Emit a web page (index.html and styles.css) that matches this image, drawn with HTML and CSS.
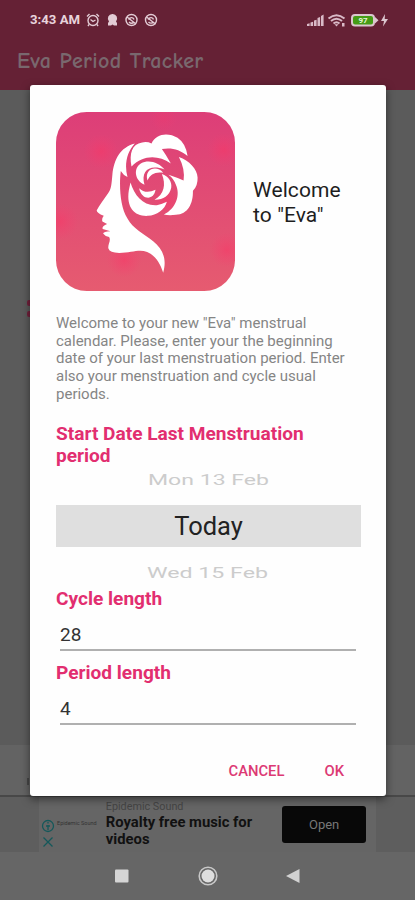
FILE: index.html
```html
<!DOCTYPE html>
<html lang="en">
<head>
<meta charset="utf-8">
<title>Eva Period Tracker</title>
<link rel="stylesheet" href="styles.css">
</head>
<body>
<div class="screen">
  <header class="appbar">
    <div class="status">
      <span class="clock">3:43 AM</span>
      <svg class="status-left" viewBox="0 0 74 16">
        <g fill="none" stroke="#e3ccd5" stroke-width="1.4">
          <circle cx="8" cy="8.5" r="5"/><path d="M2 4.5 4.5 2M14 4.5 11.500 2M4 12.500 3 14M12 12.500l1 1.500M5.500 7.500 8 9.500l2.500-1.500"/>
          <circle cx="46.500" cy="8" r="5.500"/><path d="M42 5l9 7M43.500 7.500c2-3 5-2 5.500 0M44 10c2 2 4 1 5 0"/>
          <circle cx="66" cy="8" r="5.500"/><path d="M61.500 5l9 7M63 7.500c2-3 5-2 5.500 0M63.500 10c2 2 4 1 5 0"/>
        </g>
        <path fill="#e3ccd5" d="M27.500 2a4.500 4.500 0 0 1 3.500 7.500l1 1.500v2.500h-3l-1.500-1-1.500 1h-3V11l1-1.500A4.500 4.500 0 0 1 27.500 2z"/>
      </svg>
      <svg class="status-right" viewBox="0 0 84 16">
        <path fill="#d9bac7" d="M1 14v-2l2.600-.8V14zM4.500 14v-3.500l2.600-.8V14zM8 14V8.500l2.600-.8V14zM11.500 14V6l2.600-1v9zM15 14V4l2.600-1.500V14z"/>
        <g fill="none" stroke="#d9bac7" stroke-width="2"><path d="M22.500 6.500q8-6.500 16 0M25 9q5.500-4.500 11 0M27.500 11.500q3-2.500 6 0"/></g>
        <path fill="#d9bac7" d="m30.500 14.500-2-2.200h4zM36 11h2.500v3.500H36z"/>
        <rect x="46" y="3" width="22" height="10.500" rx="3" fill="#459b16" stroke="#dcc6cf" stroke-width="2"/>
        <path fill="#dcc6cf" d="m69 5 3.500 3.200L69 11.500zM79 2l-4 7h3l-1 5.500 5-7.500h-3.300z"/>
        <text x="57" y="11" class="battery-text">97</text>
      </svg>
    </div>
    <h1 class="app-title">Eva Period Tracker</h1>
  </header>
  <main class="backdrop"><span class="backdrop-mark"></span><span class="backdrop-mark"></span></main>
  <section class="summary"><span class="summary-mark"></span></section>
  <aside class="ad">
    <div class="ad-brand">
      <svg class="ad-icons" viewBox="0 0 14 32"><g fill="none" stroke="#14585a" stroke-width="1.300"><circle cx="7" cy="7" r="5.500"/><path d="M7 6v5M7 3v1.500M5 7h4M2.500 18.500l9 9M11.500 18.500l-9 9"/></g></svg>
      <span class="ad-logo">Epidemic Sound</span>
    </div>
    <div class="ad-copy">
      <span class="ad-name">Epidemic Sound</span>
      <strong class="ad-headline">Royalty free music for<br>videos</strong>
    </div>
    <span class="ad-button">Open</span>
  </aside>
  <nav class="navbar">
    <svg class="nav-icons" viewBox="0 0 190 24">
      <rect x="3" y="5.500" width="13.500" height="13" rx="1" fill="#d5d5d5"/>
      <circle cx="96" cy="12" r="8.800" fill="none" stroke="#c8c8c8" stroke-width="1.600"/><circle cx="96" cy="12" r="6.500" fill="#dedede"/>
      <path d="M187.500 5v14l-13.500-7z" fill="#d2d2d2"/>
    </svg>
  </nav>

  <div class="dialog">
    <div class="intro">
      <svg class="logo" viewBox="18 19 536 536">
        <defs>
          <linearGradient id="tile" x1="0" y1="0" x2="0" y2="1"><stop offset="0" stop-color="#dd3e78"/><stop offset="1" stop-color="#e65b70"/></linearGradient>
          <radialGradient id="spark"><stop offset="0" stop-color="#fa3565" stop-opacity=".5"/><stop offset="1" stop-color="#fa3b70" stop-opacity="0"/></radialGradient>
          <clipPath id="round"><rect x="18" y="19" width="536" height="536" rx="92"/></clipPath>
        </defs>
        <g clip-path="url(#round)">
          <path fill="url(#tile)" d="M18 19h536v536H18z"/>
          <g fill="url(#spark)"><circle cx="153" cy="137" r="52"/><circle cx="520" cy="132" r="50"/><circle cx="30" cy="347" r="55"/><circle cx="222" cy="462" r="52"/><circle cx="530" cy="432" r="52"/><circle cx="340" cy="38" r="40" opacity=".5"/><circle cx="350" cy="285" r="40"/></g>
        </g>
        <g fill="#fff">
          <path d="M254 113C210 125 192 160 187 205C184 238 184 250 173 264C160 283 148 299 140 313Q139 320 161 330Q154 339 157 347L171 354Q154 361 158 369L181 376Q160 377 159 383Q164 391 177 393C184 404 172 416 175 428Q179 441 207 441C245 440 267 429 291 438C316 449 329 471 339 500C351 458 337 429 309 406C281 383 249 370 232 338C209 303 207 237 212 196Q219 208 232 214C222 176 230 139 254 113Z"/>
          <path d="M244 182C237 142 245 115 276 110Q291 107 304 113C318 82 355 80 382 96Q407 113 412 151C389 131 363 125 335 130Q347 147 362 173C323 147 280 147 244 182Z"/>
          <path d="M386 154C417 164 441 191 442 215Q443 240 428 255C429 293 413 326 377 327Q356 330 341 326C378 308 391 267 377 237Q370 218 355 207Q379 215 400 224Q405 190 386 154Z"/>
          <path d="M241 230C253 269 279 301 320 298Q336 295 350 288C344 311 320 329 293 330C254 332 228 306 236 254Z"/>
          <path d="M283 237C252 222 250 187 272 173C297 160 326 171 343 191C299 174 271 194 283 237Z"/>
          <path d="M292 224C281 190 319 176 339 201C315 197 300 206 292 224Z"/>
          <path d="M335 205C355 211 366 229 363 246C358 271 337 283 313 282C342 266 348 237 335 205Z"/>
          <path d="M267 247Q286 266 316 252C311 286 273 282 267 247Z"/>
        </g>
      </svg>
      <h2 class="welcome">Welcome<br>to "Eva"</h2>
    </div>
    <p class="description">Welcome to your new "Eva" menstrual<br>calendar. Please, enter your the beginning<br>date of your last menstruation period. Enter<br>also your menstruation and cycle usual<br>periods.</p>
    <h3 class="label">Start Date Last Menstruation<br>period</h3>
    <div class="picker">
      <svg class="option" viewBox="0 0 304 20"><text x="92" y="14.500" textLength="121" lengthAdjust="spacingAndGlyphs">Mon 13 Feb</text></svg>
      <div class="selected">Today</div>
      <svg class="option option-next" viewBox="0 0 304 20"><text x="91" y="14.500" textLength="121" lengthAdjust="spacingAndGlyphs">Wed 15 Feb</text></svg>
    </div>
    <h3 class="label">Cycle length</h3>
    <div class="field">28</div>
    <h3 class="label">Period length</h3>
    <div class="field">4</div>
    <div class="actions"><span>CANCEL</span><span>OK</span></div>
  </div>
</div>
</body>
</html>
```
FILE: styles.css
```css
* { box-sizing: border-box; }
body { margin: 0; font-family: Roboto, "Liberation Sans", sans-serif; }
.screen { position: relative; width: 415px; height: 900px; display: flex; flex-direction: column; overflow: hidden; background: #666; }
.appbar { height: 90px; background: #652135; }
.status { height: 38px; padding: 1px 25px 0 30px; display: flex; align-items: center; }
.clock { width: 55px; color: #e8d4dc; font-size: 13.2px; font-weight: 700; white-space: nowrap; }
.status-left { width: 74px; height: 16px; }
.status-right { width: 84px; height: 16px; margin-left: auto; }
.battery-text { font: 700 8px Roboto, sans-serif; fill: #e5f5da; text-anchor: middle; }
.app-title { margin: 9px 0 0 17px; color: #79686e; font: 700 22px/28px "Comic Neue", Lato, sans-serif; letter-spacing: .35px; white-space: nowrap; }
.backdrop { height: 655px; padding: 210px 0 0 27px; background: #5b5b5b; }
.backdrop-mark { display: block; width: 3px; height: 6px; margin-bottom: 5px; border-radius: 2px 0 0 2px; background: #74203c; }
.summary { height: 52px; background: #636363; border-bottom: 2px solid #484848; padding: 33px 0 0 27px; }
.summary-mark { display: block; width: 2px; height: 7px; background: #484848; }
.ad { height: 55px; padding: 2px 49px 0 41px; display: flex; background: linear-gradient(90deg, #5e5e5e 39px, #656565 39px, #656565 376px, #5e5e5e 376px); }
.ad-brand { width: 65px; padding-top: 20px; display: flex; gap: 2px; }
.ad-icons { width: 14px; height: 32px; flex: none; }
.ad-logo { margin-top: 1px; color: #333; font-size: 5.5px; line-height: 7px; white-space: nowrap; }
.ad-copy { width: 177px; display: flex; flex-direction: column; }
.ad-name { color: #444; font-size: 10.8px; line-height: 15px; white-space: nowrap; }
.ad-headline { color: #111; font-size: 14.8px; line-height: 17px; font-weight: 700; white-space: nowrap; }
.ad-button { width: 84px; height: 37px; margin-top: 7px; border-radius: 3px; background: #080808; color: #777; font-size: 13px; line-height: 37px; text-align: center; }
.navbar { height: 48px; padding: 12px 0 0 112px; }
.nav-icons { width: 190px; height: 24px; display: block; }
.dialog { position: absolute; left: 30px; top: 85px; width: 356px; height: 711px; padding: 26px 26px 0; border-radius: 3px; background: #fefefe; box-shadow: 0 3px 9px rgba(0,0,0,.5); }
.intro { display: flex; align-items: center; gap: 18px; height: 180px; }
.logo { width: 179px; height: 179px; flex: none; }
.welcome { margin: 4px 0 0; color: #1e1e1e; font-size: 21px; line-height: 25px; font-weight: 400; white-space: nowrap; letter-spacing: .1px; }
.description { height: 89px; margin: 24px 0 0; color: #858585; font-size: 15px; line-height: 17.7px; white-space: nowrap; }
.label { margin: 0; color: #e22e70; font-size: 19.1px; line-height: 22px; font-weight: 700; white-space: nowrap; }
.description + .label { margin-top: 19px; }
.picker { height: 121px; padding-top: 3px; }
.option { display: block; width: 304px; height: 20px; font: 15px Roboto, sans-serif; fill: #ccc; }
.option-next { margin-top: 16px; }
.selected { width: 305px; height: 42px; margin-top: 15px; background: #dfdfdf; color: #222; font-size: 25.5px; line-height: 43px; text-align: center; }
.field { width: 296px; height: 41px; margin: 0 0 11px 4px; padding-top: 14px; border-bottom: 2px solid #b0b0b0; color: #333; font-size: 19px; line-height: 22px; }
.actions { display: flex; gap: 40px; padding: 26px 16px 0; justify-content: flex-end; color: #dc3974; font-size: 14.8px; line-height: 18px; font-weight: 500; }
```
